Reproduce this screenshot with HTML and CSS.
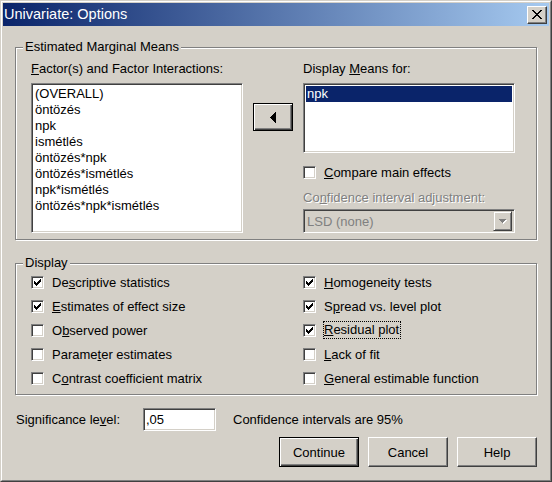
FILE: index.html
```html
<!DOCTYPE html>
<html>
<head>
<meta charset="utf-8">
<title>Univariate: Options</title>
<link rel="stylesheet" href="styles.css">
</head>
<body>
<div class="window">
  <div class="frame">
    <div class="titlebar">
      <span class="title">Univariate: Options</span>
      <div class="close">
        <svg width="10" height="9" viewBox="0 0 10 9" shape-rendering="crispEdges"><path fill="#000" d="M0 0h2v1h-2zM8 0h2v1h-2zM1 1h2v1h-2zM7 1h2v1h-2zM2 2h2v1h-2zM6 2h2v1h-2zM3 3h4v1h-4zM4 4h2v1h-2zM3 5h4v1h-4zM2 6h2v1h-2zM6 6h2v1h-2zM1 7h2v1h-2zM7 7h2v1h-2zM0 8h2v1h-2zM8 8h2v1h-2z"/></svg>
      </div>
    </div>

    <div class="content">
      <div class="group g1">
        <span class="legend">Estimated Marginal Means</span>
        <div class="col">
          <div class="lbl"><u>F</u>actor(s) and Factor Interactions:</div>
          <div class="listbox lb-left">
            <div class="item">(OVERALL)</div>
            <div class="item">öntözés</div>
            <div class="item">npk</div>
            <div class="item">ismétlés</div>
            <div class="item">öntözés*npk</div>
            <div class="item">öntözés*ismétlés</div>
            <div class="item">npk*ismétlés</div>
            <div class="item">öntözés*npk*ismétlés</div>
          </div>
        </div>
        <div class="mid">
          <div class="btn default arrow-btn">
            <svg width="6" height="11" viewBox="0 0 6 11" shape-rendering="crispEdges"><path fill="#000" d="M5 0h1v1h-1zM4 1h2v1h-2zM3 2h3v1h-3zM2 3h4v1h-4zM1 4h5v1h-5zM0 5h6v1h-6zM1 6h5v1h-5zM2 7h4v1h-4zM3 8h3v1h-3zM4 9h2v1h-2zM5 10h1v1h-1z"/></svg>
          </div>
        </div>
        <div class="col">
          <div class="lbl">Display <u>M</u>eans for:</div>
          <div class="listbox lb-right">
            <div class="item selected">npk</div>
          </div>
          <div class="check cmp"><span class="box"></span><span><u>C</u>ompare main effects</span></div>
          <div class="lbl disabled cia">Co<u>n</u>fidence interval adjustment:</div>
          <div class="combo">
            <span class="combo-text">LSD (none)</span>
            <div class="combo-btn">
              <svg width="8" height="5" viewBox="0 0 8 5" shape-rendering="crispEdges"><path fill="#fff" d="M1 1h7v1h-7zM2 2h5v1h-5zM3 3h3v1h-3zM4 4h1v1h-1z"/><path fill="#808080" d="M0 0h7v1h-7zM1 1h5v1h-5zM2 2h3v1h-3zM3 3h1v1h-1z"/></svg>
            </div>
          </div>
        </div>
      </div>

      <div class="group g2">
        <span class="legend">Display</span>
        <div class="checks">
          <div class="check"><span class="box checked"><svg width="7" height="7" viewBox="0 0 7 7" shape-rendering="crispEdges"><path fill="#000" d="M6 0h1v1h-1zM5 1h2v1h-2zM0 2h1v1h-1zM4 2h3v1h-3zM0 3h2v1h-2zM3 3h3v1h-3zM0 4h5v1h-5zM1 5h3v1h-3zM2 6h1v1h-1z"/></svg></span><span>De<u>s</u>criptive statistics</span></div>
          <div class="check"><span class="box checked"><svg width="7" height="7" viewBox="0 0 7 7" shape-rendering="crispEdges"><path fill="#000" d="M6 0h1v1h-1zM5 1h2v1h-2zM0 2h1v1h-1zM4 2h3v1h-3zM0 3h2v1h-2zM3 3h3v1h-3zM0 4h5v1h-5zM1 5h3v1h-3zM2 6h1v1h-1z"/></svg></span><span><u>H</u>omogeneity tests</span></div>
          <div class="check"><span class="box checked"><svg width="7" height="7" viewBox="0 0 7 7" shape-rendering="crispEdges"><path fill="#000" d="M6 0h1v1h-1zM5 1h2v1h-2zM0 2h1v1h-1zM4 2h3v1h-3zM0 3h2v1h-2zM3 3h3v1h-3zM0 4h5v1h-5zM1 5h3v1h-3zM2 6h1v1h-1z"/></svg></span><span><u>E</u>stimates of effect size</span></div>
          <div class="check"><span class="box checked"><svg width="7" height="7" viewBox="0 0 7 7" shape-rendering="crispEdges"><path fill="#000" d="M6 0h1v1h-1zM5 1h2v1h-2zM0 2h1v1h-1zM4 2h3v1h-3zM0 3h2v1h-2zM3 3h3v1h-3zM0 4h5v1h-5zM1 5h3v1h-3zM2 6h1v1h-1z"/></svg></span><span>S<u>p</u>read vs. level plot</span></div>
          <div class="check"><span class="box"></span><span>O<u>b</u>served power</span></div>
          <div class="check"><span class="box checked"><svg width="7" height="7" viewBox="0 0 7 7" shape-rendering="crispEdges"><path fill="#000" d="M6 0h1v1h-1zM5 1h2v1h-2zM0 2h1v1h-1zM4 2h3v1h-3zM0 3h2v1h-2zM3 3h3v1h-3zM0 4h5v1h-5zM1 5h3v1h-3zM2 6h1v1h-1z"/></svg></span><span class="focus"><u>R</u>esidual plot</span></div>
          <div class="check"><span class="box"></span><span>Parame<u>t</u>er estimates</span></div>
          <div class="check"><span class="box"></span><span><u>L</u>ack of fit</span></div>
          <div class="check"><span class="box"></span><span>C<u>o</u>ntrast coefficient matrix</span></div>
          <div class="check"><span class="box"></span><span><u>G</u>eneral estimable function</span></div>
        </div>
      </div>

      <div class="sig-row">
        <span class="sig-label">Significance le<u>v</u>el:</span>
        <div class="field">,05</div>
        <span class="ci-text">Confidence intervals are 95%</span>
      </div>

      <div class="btn-row">
        <div class="btn default push">Continue</div>
        <div class="btn push">Cancel</div>
        <div class="btn push">Help</div>
      </div>
    </div>
  </div>
</div>
</body>
</html>
```

FILE: styles.css
```css
* { box-sizing: border-box; }
html, body { margin: 0; padding: 0; }
body {
  width: 552px;
  height: 482px;
  overflow: hidden;
  background: #d4d0c8;
  font-family: "Liberation Sans", Arial, sans-serif;
  font-size: 13px;
  color: #000;
}
u { text-decoration: underline; text-underline-offset: 1px; }

.window {
  width: 552px;
  height: 482px;
  border: 1px solid;
  border-color: #d4d0c8 #404040 #404040 #d4d0c8;
  background: #d4d0c8;
}
.frame {
  height: 100%;
  border: 1px solid;
  border-color: #fff #808080 #808080 #fff;
  padding: 1px;
  display: flex;
  flex-direction: column;
}
.titlebar {
  height: 23px;
  flex: none;
  display: flex;
  align-items: center;
  justify-content: space-between;
  padding: 0 2px 0 1px;
  background: linear-gradient(to right, #0a246a, #a6caf0);
}
.title {
  color: #fff;
  font-size: 14.5px;
  line-height: 23px;
  white-space: nowrap;
}
.close {
  width: 20px;
  height: 18px;
  background: #d4d0c8;
  border: 1px solid;
  border-color: #fff #404040 #404040 #fff;
  box-shadow: inset -1px -1px 0 #808080;
  display: flex;
  align-items: center;
  justify-content: center;
}

.content {
  flex: 1;
  padding: 21px 12px 0 12px;
  display: flex;
  flex-direction: column;
}

.group {
  position: relative;
  border: 1px solid #808080;
  box-shadow: inset 1px 1px 0 #fff, 1px 1px 0 #fff;
}
.legend {
  position: absolute;
  top: -9px;
  left: 7px;
  padding: 0 2px;
  line-height: 16px;
  background: #d4d0c8;
  white-space: nowrap;
}

.g1 {
  display: flex;
  gap: 10px;
  padding: 13px 21px 6px 15px;
}
.col {
  width: 212px;
  display: flex;
  flex-direction: column;
}
.mid {
  width: 40px;
  padding-top: 42px;
}
.lbl {
  line-height: 16px;
  height: 16px;
  white-space: nowrap;
}
.disabled {
  color: #808080;
  text-shadow: 1px 1px 0 #fff;
}
.listbox {
  margin-top: 6px;
  background: #fff;
  border: 1px solid;
  border-color: #808080 #fff #fff #808080;
  box-shadow: inset 1px 1px 0 #404040, inset -1px -1px 0 #d4d0c8;
  padding: 2px;
}
.lb-left { height: 150px; }
.lb-right { height: 70px; }
.item {
  height: 16px;
  line-height: 16px;
  padding-left: 1px;
  white-space: nowrap;
}
.item.selected {
  background: #0a246a;
  color: #fff;
}

.btn {
  background: #d4d0c8;
  border: 1px solid;
  border-color: #fff #404040 #404040 #fff;
  box-shadow: inset -1px -1px 0 #808080;
  display: flex;
  align-items: center;
  justify-content: center;
}
.btn.default {
  border-color: #000;
  box-shadow: inset 1px 1px 0 #fff, inset -1px -1px 0 #404040, inset -2px -2px 0 #808080;
}
.arrow-btn {
  width: 40px;
  height: 28px;
}

.check {
  display: flex;
  align-items: center;
  height: 24px;
  white-space: nowrap;
}
.cmp {
  height: 16px;
  margin-top: 11px;
}
.box {
  width: 13px;
  height: 13px;
  flex: none;
  margin-right: 8px;
  background: #fff;
  border: 1px solid;
  border-color: #808080 #fff #fff #808080;
  box-shadow: inset 1px 1px 0 #404040, inset -1px -1px 0 #d4d0c8;
  display: flex;
  align-items: center;
  justify-content: center;
}
.box svg { display: block; }
.focus {
  border: 1px dotted #000;
  margin-left: -1px;
  padding-right: 1px;
  line-height: 16px;
}
.cia { margin-top: 10px; }
.combo {
  margin-top: 3px;
  height: 24px;
  background: #d4d0c8;
  border: 1px solid;
  border-color: #808080 #fff #fff #808080;
  box-shadow: inset 1px 1px 0 #404040, inset -1px -1px 0 #d4d0c8;
  padding: 2px;
  display: flex;
  align-items: center;
  justify-content: space-between;
}
.combo-text {
  color: #808080;
  padding-left: 1px;
}
.combo-btn {
  width: 19px;
  height: 20px;
  background: #d4d0c8;
  border: 1px solid;
  border-color: #d4d0c8 #404040 #404040 #d4d0c8;
  box-shadow: inset 1px 1px 0 #fff, inset -1px -1px 0 #808080;
  display: flex;
  align-items: center;
  justify-content: center;
}

.g2 {
  margin-top: 23px;
  padding: 6px 0 4px 15px;
}
.checks {
  display: grid;
  grid-template-columns: 272px 1fr;
  grid-auto-rows: 24px;
}

.sig-row {
  margin-top: 13px;
  height: 23px;
  display: flex;
  align-items: center;
}
.sig-label {
  width: 128px;
  padding-left: 1px;
  white-space: nowrap;
}
.field {
  width: 73px;
  height: 23px;
  background: #fff;
  border: 1px solid;
  border-color: #808080 #fff #fff #808080;
  box-shadow: inset 1px 1px 0 #404040, inset -1px -1px 0 #d4d0c8;
  padding: 0 0 0 2px;
  line-height: 21px;
}
.ci-text {
  margin-left: 17px;
  white-space: nowrap;
}

.btn-row {
  margin-top: 6px;
  display: flex;
  justify-content: flex-end;
  gap: 9px;
}
.push {
  width: 80px;
  height: 30px;
}
```
